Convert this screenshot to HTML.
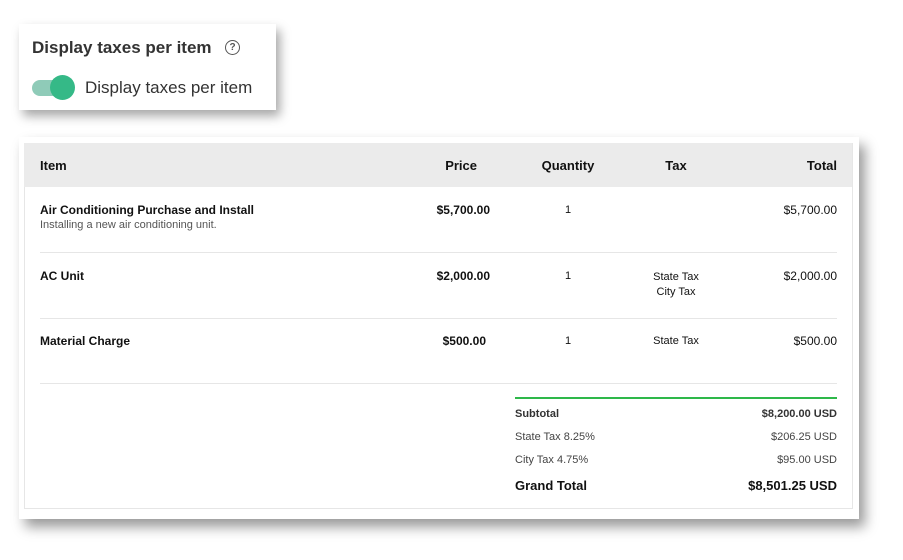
<!DOCTYPE html>
<html><head><style>
body{margin:0;width:903px;height:560px;background:#fff;position:relative;font-family:"Liberation Sans",sans-serif;overflow:hidden}
.a{position:absolute}
.card1{left:19px;top:24px;width:257px;height:86px;background:#fff;box-shadow:4px 6px 10px rgba(0,0,0,.35)}
.card2{left:19px;top:137px;width:840px;height:382px;background:#fff;box-shadow:6px 8px 12px rgba(0,0,0,.4)}
.inner{left:24px;top:143px;width:827px;height:365px;border:1px solid #e6e6e6;border-top:none}
.hdr{left:24px;top:143px;width:828px;height:44px;background:#ebebeb}
.t{position:absolute;font-size:12px;color:#111;white-space:nowrap}
.b{font-weight:bold}
.h{font-size:13px;font-weight:bold;top:158px}
.r{text-align:right}
.c{text-align:center}
.line{position:absolute;left:40px;width:797px;height:1px;background:#e6e6e6}
.g{color:#555}
</style></head><body>
<div class="a card1"></div>
<div class="t" style="left:32px;top:38px;font-size:17px;color:#333;font-weight:bold">Display taxes per item</div>
<div class="a" style="left:225px;top:40px;width:13px;height:13px;border:1.5px solid #555;border-radius:50%;font-size:10px;line-height:13px;text-align:center;color:#555;font-weight:bold">?</div>
<div class="a" style="left:32px;top:80px;width:40px;height:16px;border-radius:8px;background:#8fcbb8"></div>
<div class="a" style="left:50px;top:75px;width:25px;height:25px;border-radius:50%;background:#35b987"></div>
<div class="t" style="left:85px;top:78px;font-size:17px;color:#333">Display taxes per item</div>

<div class="a card2"></div>
<div class="a inner"></div>
<div class="a hdr"></div>
<div class="t h" style="left:40px">Item</div>
<div class="t h r" style="left:400px;width:77px">Price</div>
<div class="t h c" style="left:528px;width:80px">Quantity</div>
<div class="t h c" style="left:636px;width:80px">Tax</div>
<div class="t h r" style="left:750px;width:87px">Total</div>

<div class="t b" style="left:40px;top:203px">Air Conditioning Purchase and Install</div>
<div class="t g" style="left:40px;top:219px;font-size:11px">Installing a new air conditioning unit.</div>
<div class="t b r" style="left:400px;top:203px;width:90px">$5,700.00</div>
<div class="t c" style="left:528px;top:204px;width:80px;font-size:11px">1</div>
<div class="t r" style="left:750px;top:203px;width:87px">$5,700.00</div>
<div class="line" style="top:252px"></div>

<div class="t b" style="left:40px;top:269px">AC Unit</div>
<div class="t b r" style="left:400px;top:269px;width:90px">$2,000.00</div>
<div class="t c" style="left:528px;top:270px;width:80px;font-size:11px">1</div>
<div class="t c" style="left:626px;top:270px;width:100px;font-size:11px;line-height:15px">State Tax<br>City Tax</div>
<div class="t r" style="left:750px;top:269px;width:87px">$2,000.00</div>
<div class="line" style="top:318px"></div>

<div class="t b" style="left:40px;top:334px">Material Charge</div>
<div class="t b r" style="left:400px;top:334px;width:86px">$500.00</div>
<div class="t c" style="left:528px;top:335px;width:80px;font-size:11px">1</div>
<div class="t c" style="left:626px;top:335px;width:100px;font-size:11px">State Tax</div>
<div class="t r" style="left:750px;top:334px;width:87px">$500.00</div>
<div class="line" style="top:383px"></div>

<div class="a" style="left:515px;top:397px;width:322px;height:2px;background:#2eb84a"></div>
<div class="t b" style="left:515px;top:408px;font-size:11px;color:#333">Subtotal</div>
<div class="t r b" style="left:700px;top:408px;width:137px;font-size:11px;color:#333">$8,200.00 USD</div>
<div class="t" style="left:515px;top:431px;font-size:11px;color:#444">State Tax 8.25%</div>
<div class="t r" style="left:700px;top:431px;width:137px;font-size:11px;color:#444">$206.25 USD</div>
<div class="t" style="left:515px;top:454px;font-size:11px;color:#444">City Tax 4.75%</div>
<div class="t r" style="left:700px;top:454px;width:137px;font-size:11px;color:#444">$95.00 USD</div>
<div class="t b" style="left:515px;top:478px;font-size:13px">Grand Total</div>
<div class="t r b" style="left:690px;top:478px;width:147px;font-size:13px">$8,501.25 USD</div>
</body></html>
